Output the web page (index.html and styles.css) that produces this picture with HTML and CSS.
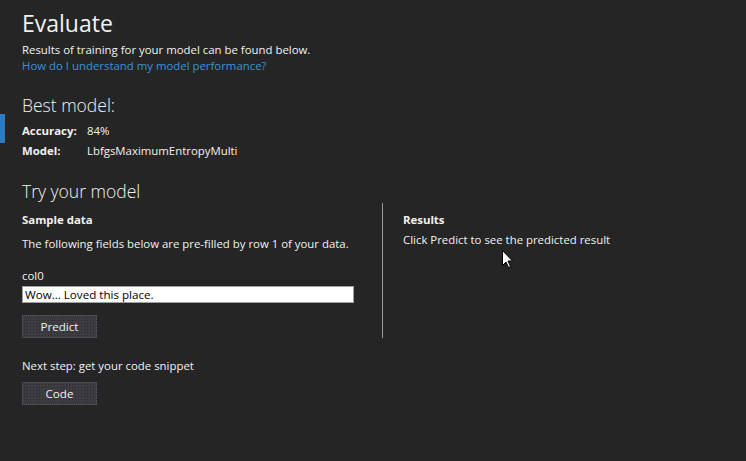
FILE: index.html
```html
<!DOCTYPE html>
<html>
<head>
<meta charset="utf-8">
<link rel="stylesheet" href="styles.css">
</head>
<body>
<div class="page">
  <h1 class="title">Evaluate</h1>
  <p class="sub">Results of training for your model can be found below.</p>
  <a class="link" href="#">How do I understand my model performance?</a>

  <section class="best">
    <span class="marker"></span>
    <h2 class="h2">Best model:</h2>
    <div class="kv"><span class="k">Accuracy:</span><span class="v">84%</span></div>
    <div class="kv"><span class="k">Model:</span><span class="v">LbfgsMaximumEntropyMulti</span></div>
  </section>

  <h2 class="h2 try">Try your model</h2>
  <div class="cols">
    <div class="left">
      <div class="bold">Sample data</div>
      <p class="txt">The following fields below are pre-filled by row 1 of your data.</p>
      <label class="lbl">col0</label>
      <div class="input">Wow... Loved this place.</div>
      <button class="btn">Predict</button>
      <p class="txt next">Next step: get your code snippet</p>
      <button class="btn code">Code</button>
    </div>
    <div class="divider"></div>
    <div class="right">
      <div class="bold">Results</div>
      <p class="txt r">Click Predict to see the predicted result</p>
    </div>
  </div>
  <svg class="cursor" width="12" height="19" viewBox="0 0 12 19"><path d="M0.5 0.5 L0.5 15.5 L4 12 L6.5 17.5 L8.5 16.5 L6 11 L10.5 11 Z" fill="#fff" stroke="#000" stroke-width="1"/></svg>
</div>
</body>
</html>
```

FILE: styles.css
```css
html, body { margin: 0; padding: 0; }
body {
  background: #252526;
  color: #f1f1f1;
  font-family: "Open Sans", "Noto Sans", sans-serif;
  font-size: 11.4px;
  width: 746px;
  height: 461px;
  overflow: hidden;
}
.page { position: relative; padding: 8px 22px 0 22px; }
.title { margin: 0; font-weight: 400; font-size: 23px; line-height: 30px; }
.sub { margin: 4px 0 0 0; line-height: 16px; }
.link { display: block; color: #3794d8; text-decoration: none; line-height: 16px; }
.best { position: relative; margin-top: 18px; }
.marker { position: absolute; left: -22px; top: 22px; width: 5px; height: 29px; background: #2c7bbf; }
.h2 { margin: 0; font-weight: 300; font-size: 17.5px; line-height: 26px; }
.best .h2 { margin-bottom: 3px; }
.kv { display: flex; line-height: 20px; }
.k { font-weight: 700; width: 65px; }
.try { margin-top: 17px; }
.cols { display: flex; margin-top: -1px; }
.left { width: 360px; }
.divider { width: 1px; background: #9a9a9a; height: 135px; margin-top: 0; }
.right { padding-left: 20px; }
.bold { font-weight: 700; line-height: 18px; margin-top: 8px; }
.txt { margin: 0; line-height: 18px; }
.left .txt { margin-top: 6px; }
.lbl { display: block; margin-top: 15px; line-height: 16px; }
.input {
  width: 326px; height: 15px; margin-top: 2px;
  background: #fff; color: #000; border: 1px solid #a0a0a0;
  padding: 0 2px; line-height: 15px; font-size: 11.6px;
}
.btn {
  display: block; width: 75px; height: 23px; margin-top: 12px;
  background-color: #3c3c41;
  background-image: radial-gradient(circle, #2a2a2e 0.6px, transparent 0.8px);
  background-size: 3px 3px;
  color: #f1f1f1; border: 1px dotted #5a5a60;
  font-family: inherit; font-size: 11.6px; padding: 0;
}
.left .next { margin-top: 19px; }
.btn.code { margin-top: 7px; }
.right .txt.r { margin-top: 2px; }
.cursor { position: absolute; left: 502px; top: 250px; }
```
